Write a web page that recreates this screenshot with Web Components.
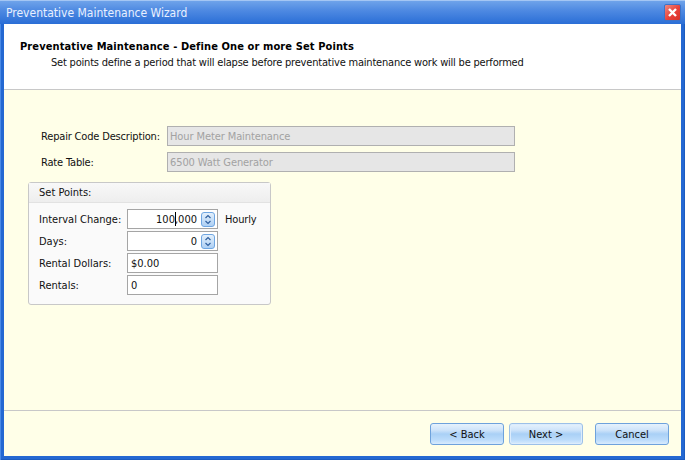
<!DOCTYPE html>
<html>
<head>
<meta charset="utf-8">
<title>Preventative Maintenance Wizard</title>
<style>
html, body { margin: 0; padding: 0; }
body { font: 11px "DejaVu Sans Condensed", "Liberation Sans", sans-serif; color: #111; }
</style>
</head>
<body>
<wizard-window heading="Preventative Maintenance Wizard">
    <wizard-header slot="header" heading="Preventative Maintenance - Define One or more Set Points" note="Set points define a period that will elapse before preventative maintenance work will be performed"></wizard-header>
    <field-row label="Repair Code Description:"><text-box disabled value="Hour Meter Maintenance"></text-box></field-row>
    <field-row label="Rate Table:"><text-box disabled value="6500 Watt Generator"></text-box></field-row>
    <group-panel heading="Set Points:">
        <point-row label="Interval Change:" suffix="Hourly"><text-box spin right value="100,000" caret="3"></text-box></point-row>
        <point-row label="Days:"><text-box spin right value="0"></text-box></point-row>
        <point-row label="Rental Dollars:"><text-box value="$0.00"></text-box></point-row>
        <point-row label="Rentals:"><text-box value="0"></text-box></point-row>
    </group-panel>
    <wizard-button slot="footer">&lt; Back</wizard-button>
    <wizard-button slot="footer" focused>Next &gt;</wizard-button>
    <wizard-button slot="footer" style="margin-left: 7px">Cancel</wizard-button>
</wizard-window>
<script>
class WizardWindow extends HTMLElement {
    constructor() {
        super();
        this.attachShadow({ mode: "open" });
        this.shadowRoot.innerHTML = `
<style>
:host { display: flex; flex-direction: column; box-sizing: border-box; width: 685px; height: 460px; padding: 0 4px 4px; background: #2468d2; box-shadow: inset 1px 0 #4a8ae6, inset -1px 0 #1c5cc0, inset 0 -1px #1c5cc0; }
.title { display: flex; align-items: center; justify-content: space-between; flex: none; height: 24px; margin: 0 -4px; padding: 0 4px 0 6px; color: #e8f0ff; font-size: 12px; border-top: 1px solid #a4c6f4; box-sizing: border-box; background: linear-gradient(#6fa3ea, #4f8ae2 40%, #2a6ed6); }
.close { display: flex; align-items: center; justify-content: center; width: 15px; height: 15px; border: 1px solid #3d72c8; border-radius: 2px; background: linear-gradient(135deg, #f08a80, #e8403a 55%, #d83028); }
.client { flex: 1; display: flex; flex-direction: column; background: #ffffe8; min-height: 0; }
.body { flex: 1; padding: 36px 0 0 24px; min-height: 0; }
.footer { flex: none; display: flex; justify-content: flex-end; gap: 5px; height: 46px; box-sizing: border-box; padding: 12px 12px 0 0; border-top: 1px solid #c8c8c8; }
</style>
<div class="title"><span id="heading"></span><span class="close"><svg width="11" height="11" viewBox="0 0 11 11"><path d="M2 2l7 7M9 2l-7 7" stroke="#fff" stroke-width="2.4" fill="none"/></svg></span></div>
<div class="client">
    <slot name="header"></slot>
    <div class="body"><slot></slot></div>
    <div class="footer"><slot name="footer"></slot></div>
</div>`;
    }
    connectedCallback() {
        this.shadowRoot.getElementById("heading").textContent = this.getAttribute("heading");
    }
}

class WizardHeader extends HTMLElement {
    constructor() {
        super();
        this.attachShadow({ mode: "open" });
        this.shadowRoot.innerHTML = `
<style>
:host { display: block; box-sizing: border-box; height: 66px; padding: 16px 0 0 16px; background: #fff; border-bottom: 1px solid #c8c8c8; }
h1 { margin: 0; font-size: 11px; font-weight: bold; line-height: 14px; color: #000; letter-spacing: .11px; }
p { margin: 2px 0 0 31px; font-size: 11px; line-height: 14px; color: #111; letter-spacing: -.2px; }
</style>
<h1 id="heading"></h1>
<p id="note"></p>`;
    }
    connectedCallback() {
        this.shadowRoot.getElementById("heading").textContent = this.getAttribute("heading");
        this.shadowRoot.getElementById("note").textContent = this.getAttribute("note");
    }
}

class FieldRow extends HTMLElement {
    constructor() {
        super();
        this.attachShadow({ mode: "open" });
        this.shadowRoot.innerHTML = `
<style>
:host { display: flex; align-items: center; width: 474px; height: 20px; margin-bottom: 6px; padding-left: 13px; }
span { flex: none; width: 126px; letter-spacing: -.17px; }
::slotted(*) { flex: 1; }
</style>
<span id="label"></span><slot></slot>`;
    }
    connectedCallback() {
        this.shadowRoot.getElementById("label").textContent = this.getAttribute("label");
    }
}

class TextBox extends HTMLElement {
    constructor() {
        super();
        this.attachShadow({ mode: "open" });
        this.shadowRoot.innerHTML = `
<style>
:host { display: flex; align-items: center; box-sizing: border-box; height: 20px; padding: 0 3px; background: #fff; border: 1px solid #a5a5a5; color: #111; }
:host([disabled]) { padding-left: 2px; background: #e6e6e6; color: #a2a2a2; border-color: #b0b0b0; letter-spacing: -.1px; }
.text { flex: 1; white-space: nowrap; }
:host([right]) .text { text-align: right; }
.caret { display: inline-block; width: 0; height: 14px; margin-right: -1px; border-left: 1px solid #000; vertical-align: -3px; }
.spin { display: flex; align-items: center; justify-content: center; flex: none; width: 14px; height: 15px; margin-left: 4px; margin-right: -1px; box-sizing: border-box; border: 1px solid #6fa6e2; border-radius: 3px; background: linear-gradient(#e4f0fc, #aed0f4); }
</style>
<span class="text" id="text"></span>`;
    }
    connectedCallback() {
        const value = this.getAttribute("value");
        const text = this.shadowRoot.getElementById("text");
        const caret = this.getAttribute("caret");
        if (caret) {
            text.innerHTML = `${value.slice(0, caret)}<span class="caret"></span>${value.slice(caret)}`;
        } else {
            text.textContent = value;
        }
        if (this.hasAttribute("spin")) {
            const spin = document.createElement("span");
            spin.className = "spin";
            spin.innerHTML = `<svg width="8" height="11" viewBox="0 0 8 11"><path d="M1.5 4l2.5-2.5 2.5 2.5M1.5 7l2.5 2.5 2.5-2.5" stroke="#2f5f9e" stroke-width="1.2" fill="none"/></svg>`;
            this.shadowRoot.appendChild(spin);
        }
    }
}

class GroupPanel extends HTMLElement {
    constructor() {
        super();
        this.attachShadow({ mode: "open" });
        this.shadowRoot.innerHTML = `
<style>
:host { display: block; box-sizing: border-box; width: 243px; height: 123px; margin-top: 10px; background: #fafafa; border: 1px solid #c8c8c8; border-radius: 3px; }
.top { height: 19px; line-height: 19px; padding-left: 10px; background: linear-gradient(#f8f8f8, #eeeeee); border-bottom: 1px solid #e2e2e2; }
.rows { display: flex; flex-direction: column; gap: 2px; padding: 6px 0 0 10px; }
</style>
<div class="top" id="heading"></div>
<div class="rows"><slot></slot></div>`;
    }
    connectedCallback() {
        this.shadowRoot.getElementById("heading").textContent = this.getAttribute("heading");
    }
}

class PointRow extends HTMLElement {
    constructor() {
        super();
        this.attachShadow({ mode: "open" });
        this.shadowRoot.innerHTML = `
<style>
:host { display: flex; align-items: center; height: 20px; }
.label { flex: none; width: 88px; }
::slotted(*) { flex: none; width: 91px; }
.suffix { margin-left: 7px; letter-spacing: -.15px; }
</style>
<span class="label" id="label"></span><slot></slot><span class="suffix" id="suffix"></span>`;
    }
    connectedCallback() {
        this.shadowRoot.getElementById("label").textContent = this.getAttribute("label");
        this.shadowRoot.getElementById("suffix").textContent = this.getAttribute("suffix") || "";
    }
}

class WizardButton extends HTMLElement {
    constructor() {
        super();
        this.attachShadow({ mode: "open" });
        this.shadowRoot.innerHTML = `
<style>
:host { display: flex; align-items: center; justify-content: center; box-sizing: border-box; width: 74px; height: 22px; border: 1px solid #6ea2dc; border-radius: 3px; color: #111; background: linear-gradient(#e6f2fd, #cfe4fa 30%, #a9d0f6 50%, #bcdcfb 80%, #d8ebfd); }
:host([focused]) { border-color: #9cc0e8; box-shadow: inset 0 0 0 1px #dcecfc; }
</style>
<slot></slot>`;
    }
}

customElements.define("wizard-window", WizardWindow);
customElements.define("wizard-header", WizardHeader);
customElements.define("field-row", FieldRow);
customElements.define("text-box", TextBox);
customElements.define("group-panel", GroupPanel);
customElements.define("point-row", PointRow);
customElements.define("wizard-button", WizardButton);
</script>
</body>
</html>
